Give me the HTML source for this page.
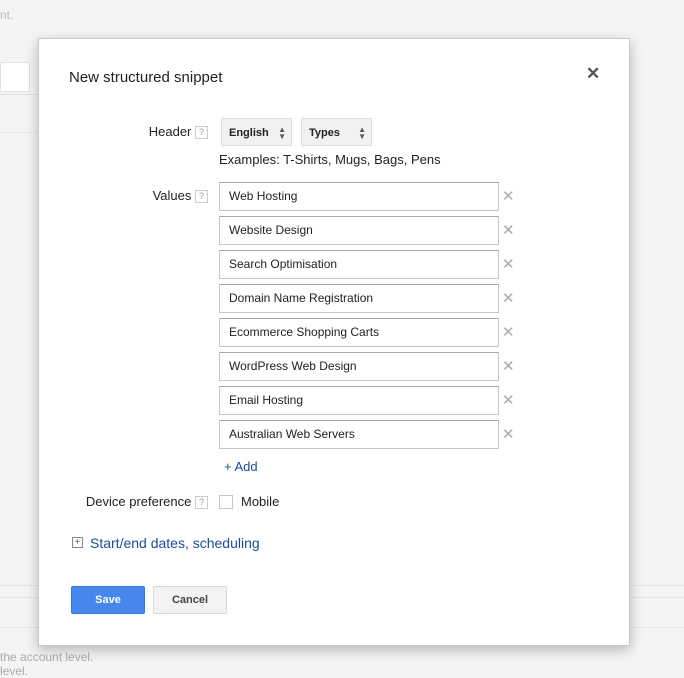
<!DOCTYPE html>
<html><head><style>
body{margin:0;width:684px;height:669px;background:#f4f4f4;font-family:"Liberation Sans",Arial,sans-serif;position:relative;overflow:hidden;color:#222}
.a{position:absolute}
.dlg{left:38px;top:38px;width:590px;height:606px;background:#fff;border:1px solid #c8c8c8;box-shadow:0 4px 12px rgba(0,0,0,.25)}
.inp{position:absolute;left:219px;width:269px;height:27px;border:1px solid #c6c6c6;border-top-color:#a8a8a8;font-size:12px;line-height:27px;padding-left:9px;color:#222;background:#fff}
.x{position:absolute;left:502px;font-size:15px;color:#aaa}
.q{display:inline-block;width:11px;height:11px;border:1px solid #ccc;font-size:9px;line-height:11px;text-align:center;color:#999;vertical-align:middle}
.sel{position:absolute;top:118px;height:28px;background:#f1f1f1;border:1px solid #ddd;font-size:11px;font-weight:bold;line-height:28px;padding-left:7px;box-sizing:border-box}
.sel span{position:absolute;right:5px;top:0;font-size:8px;line-height:7px;padding-top:7px;color:#555}
.lbl{position:absolute;font-size:13px;text-align:right}
</style></head><body>
<div class="a" style="left:0;top:8px;font-size:12px;color:#bbb">nt.</div>
<div class="a" style="left:0;top:62px;width:28px;height:28px;border:1px solid #e2e2e2;background:#fff"></div>
<div class="a" style="left:0;top:94px;width:38px;height:1px;background:#e0e0e0"></div>
<div class="a" style="left:0;top:132px;width:38px;height:1px;background:#e8e8e8"></div>
<div class="a" style="left:0;top:585px;width:684px;height:1px;background:#e4e4e4"></div>
<div class="a" style="left:0;top:597px;width:684px;height:1px;background:#e4e4e4"></div>
<div class="a" style="left:0;top:627px;width:684px;height:1px;background:#e4e4e4"></div>
<div class="a" style="left:0;top:650px;font-size:12px;color:#aaa">the account level.</div>
<div class="a" style="left:0;top:664px;font-size:12px;color:#aaa">level.</div>
<div class="a dlg"></div>
<div class="a" style="left:69px;top:69px;font-size:15px;color:#222">New structured snippet</div>
<div class="a" style="left:586px;top:64px;font-size:17px;color:#555;font-weight:bold">✕</div>
<div class="lbl" style="left:100px;top:124px;width:108px">Header <span class="q">?</span></div>
<div class="sel" style="left:221px;width:71px">English<span>▲<br>▼</span></div>
<div class="sel" style="left:301px;width:71px">Types<span>▲<br>▼</span></div>
<div class="a" style="left:219px;top:152px;font-size:13px">Examples: T-Shirts, Mugs, Bags, Pens</div>
<div class="lbl" style="left:100px;top:188px;width:108px">Values <span class="q">?</span></div>
<div class="inp" style="top:182px">Web Hosting</div><div class="x" style="top:187px">✕</div>
<div class="inp" style="top:216px">Website Design</div><div class="x" style="top:221px">✕</div>
<div class="inp" style="top:250px">Search Optimisation</div><div class="x" style="top:255px">✕</div>
<div class="inp" style="top:284px">Domain Name Registration</div><div class="x" style="top:289px">✕</div>
<div class="inp" style="top:318px">Ecommerce Shopping Carts</div><div class="x" style="top:323px">✕</div>
<div class="inp" style="top:352px">WordPress Web Design</div><div class="x" style="top:357px">✕</div>
<div class="inp" style="top:386px">Email Hosting</div><div class="x" style="top:391px">✕</div>
<div class="inp" style="top:420px">Australian Web Servers</div><div class="x" style="top:425px">✕</div>
<div class="a" style="left:224px;top:459px;font-size:13px;color:#1a4c9c">+ Add</div>
<div class="lbl" style="left:60px;top:494px;width:148px">Device preference <span class="q">?</span></div>
<div class="a" style="left:219px;top:495px;width:12px;height:12px;border:1px solid #c6c6c6"></div>
<div class="a" style="left:241px;top:494px;font-size:13px">Mobile</div>
<div class="a" style="left:72px;top:537px;width:9px;height:9px;border:1px solid #888;font-size:10px;line-height:9px;text-align:center;color:#666">+</div>
<div class="a" style="left:90px;top:535px;font-size:14px;color:#1a4c9c">Start/end dates, scheduling</div>
<div class="a" style="left:71px;top:586px;width:74px;height:28px;background:#4787ed;border:1px solid #3079ed;box-sizing:border-box;color:#fff;font-size:11px;font-weight:bold;text-align:center;line-height:27px;border-radius:2px">Save</div>
<div class="a" style="left:153px;top:586px;width:74px;height:28px;background:#f3f3f3;border:1px solid #d9d9d9;box-sizing:border-box;color:#444;font-size:11px;font-weight:bold;text-align:center;line-height:27px;border-radius:2px">Cancel</div>
</body></html>
